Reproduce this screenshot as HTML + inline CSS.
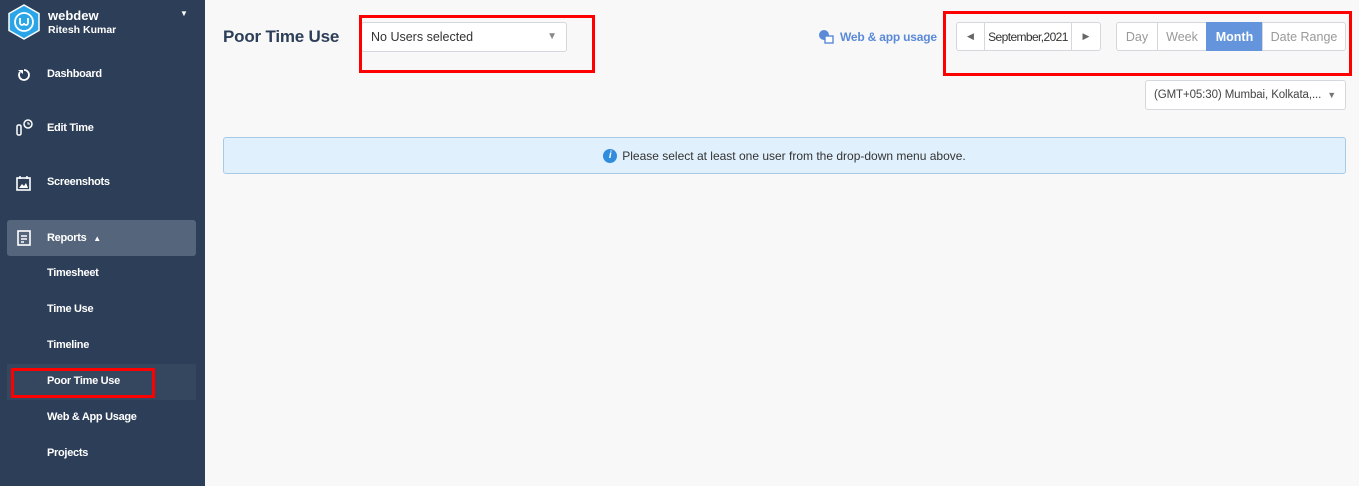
<!DOCTYPE html>
<html><head><meta charset="utf-8"><style>
*{box-sizing:border-box;margin:0;padding:0}
body{width:1359px;height:486px;overflow:hidden;background:#f8f8f8;font-family:"Liberation Sans",sans-serif;position:relative}
.sb{position:absolute;left:0;top:0;width:205px;height:486px;background:#2c3e58;color:#fff}
.a{position:absolute}
.nav{position:absolute;left:47px;font-size:11px;font-weight:bold;color:#fff;letter-spacing:-0.3px}
.btn{position:absolute;top:22px;height:29px;border:1px solid #d4d8dd;background:#fff;font-size:12.5px;color:#999;display:flex;align-items:center;justify-content:center}
</style></head><body>
<div class="sb">
  <svg class="a" style="left:7px;top:4px" width="34" height="36" viewBox="0 0 34 36"><polygon points="17,1 32,9.5 32,26.5 17,35 2,26.5 2,9.5" fill="#2aa6e8" stroke="#fff" stroke-width="1.5"/><circle cx="17" cy="18" r="9" fill="none" stroke="#fff" stroke-width="1.8"/><path d="M13 14v5a2 2 0 0 0 4 0a2 2 0 0 0 4 0v-5" fill="none" stroke="#fff" stroke-width="1.8"/></svg>
  <div class="a" style="left:48px;top:8px;font-size:13px;font-weight:bold">webdew</div>
  <div class="a" style="left:48px;top:24px;font-size:10.5px;font-weight:bold">Ritesh Kumar</div>
  <div class="a" style="left:180px;top:9px;font-size:8px">▼</div>
  <svg class="a" style="left:16px;top:67px" width="16" height="16" viewBox="0 0 16 16"><path d="M4 5a5 5 0 1 0 4-2" fill="none" stroke="#fff" stroke-width="1.8"/><path d="M2 3l5 0 0 4z" fill="#fff"/></svg>
  <div class="nav" style="top:68px">Dashboard</div>
  <svg class="a" style="left:16px;top:119px" width="20" height="20" viewBox="0 0 20 20"><rect x="1" y="6" width="4" height="10" rx="1.5" fill="none" stroke="#fff" stroke-width="1.5"/><circle cx="12" cy="5" r="4" fill="none" stroke="#fff" stroke-width="1.5"/><path d="M12 3v2h2" stroke="#fff" fill="none"/></svg>
  <div class="nav" style="top:122px">Edit Time</div>
  <svg class="a" style="left:16px;top:175px" width="15" height="16" viewBox="0 0 15 16"><rect x="1" y="3" width="13" height="12" fill="none" stroke="#fff" stroke-width="1.6"/><path d="M4 1v3M11 1v3" stroke="#fff" stroke-width="1.5"/><path d="M3 13l3-4 2 2 2-3 2 5z" fill="#fff"/></svg>
  <div class="nav" style="top:176px">Screenshots</div>
  <div class="a" style="left:7px;top:220px;width:189px;height:36px;background:#55657c;border-radius:3px"></div>
  <svg class="a" style="left:17px;top:230px" width="14" height="16" viewBox="0 0 14 16"><rect x="1" y="1" width="12" height="14" fill="none" stroke="#fff" stroke-width="1.6"/><path d="M4 6h6M4 9h6M4 12h3" stroke="#fff" stroke-width="1.4"/></svg>
  <div class="nav" style="top:232px">Reports <span style="font-size:8px;margin-left:4px">▲</span></div>
  <div class="nav" style="top:267px">Timesheet</div>
  <div class="nav" style="top:303px">Time Use</div>
  <div class="nav" style="top:339px">Timeline</div>
  <div class="a" style="left:7px;top:364px;width:189px;height:36px;background:#35465f"></div>
  <div class="a" style="left:11px;top:368px;width:144px;height:30px;border:3px solid #f00"></div>
  <div class="nav" style="top:375px">Poor Time Use</div>
  <div class="nav" style="top:411px">Web &amp; App Usage</div>
  <div class="nav" style="top:447px">Projects</div>
</div>

<div class="a" style="left:223px;top:27px;font-size:17px;font-weight:bold;color:#2c3e58;letter-spacing:-0.2px">Poor Time Use</div>
<div class="a" style="left:361px;top:22px;width:206px;height:30px;background:#fff;border:1px solid #d4d8dd;border-radius:3px;font-size:12.5px;color:#333;padding:7px 9px">No Users selected<span style="position:absolute;right:9px;top:8px;color:#888;font-size:10px">▼</span></div>
<div class="a" style="left:359px;top:15px;width:236px;height:58px;border:3px solid #f00"></div>

<svg class="a" style="left:818px;top:29px" width="16" height="15" viewBox="0 0 16 15"><circle cx="6" cy="6" r="5" fill="#5a8ad8"/><rect x="7" y="7" width="8" height="7" fill="#fff" stroke="#5a8ad8" stroke-width="1.4"/></svg>
<div class="a" style="left:840px;top:30px;font-size:12px;font-weight:bold;color:#5a8ad8;letter-spacing:-0.2px">Web &amp; app usage</div>

<div class="btn" style="left:956px;width:29px;border-radius:3px 0 0 3px;font-size:9px;color:#666">◀</div>
<div class="btn" style="left:984px;width:88px;color:#333;font-size:12px;letter-spacing:-0.6px">September,2021</div>
<div class="btn" style="left:1071px;width:30px;border-radius:0 3px 3px 0;font-size:9px;color:#666">▶</div>
<div class="btn" style="left:1116px;width:42px;border-radius:3px 0 0 3px">Day</div>
<div class="btn" style="left:1157px;width:50px">Week</div>
<div class="btn" style="left:1206px;width:57px;background:#6495dc;border-color:#6495dc;color:#fff;font-weight:bold">Month</div>
<div class="btn" style="left:1262px;width:84px;border-radius:0 3px 3px 0">Date Range</div>
<div class="a" style="left:943px;top:11px;width:409px;height:65px;border:3px solid #f00"></div>

<div class="a" style="left:1145px;top:80px;width:201px;height:30px;background:#fff;border:1px solid #d4d8dd;border-radius:3px;font-size:11.5px;color:#444;padding:8px 8px;white-space:nowrap;letter-spacing:-0.1px">(GMT+05:30) Mumbai, Kolkata,...<span style="position:absolute;right:9px;top:9px;color:#777;font-size:9px">▼</span></div>

<div class="a" style="left:223px;top:137px;width:1123px;height:37px;background:#e1f0fd;border:1px solid #a9c9e8;border-radius:3px;font-size:12px;color:#333;display:flex;align-items:center;justify-content:center"><span style="display:inline-block;width:14px;height:14px;border-radius:50%;background:#2f8ddb;color:#fff;font-size:10px;font-weight:bold;font-style:italic;line-height:14px;text-align:center;margin-right:5px">i</span>Please select at least one user from the drop-down menu above.</div>
</body></html>
